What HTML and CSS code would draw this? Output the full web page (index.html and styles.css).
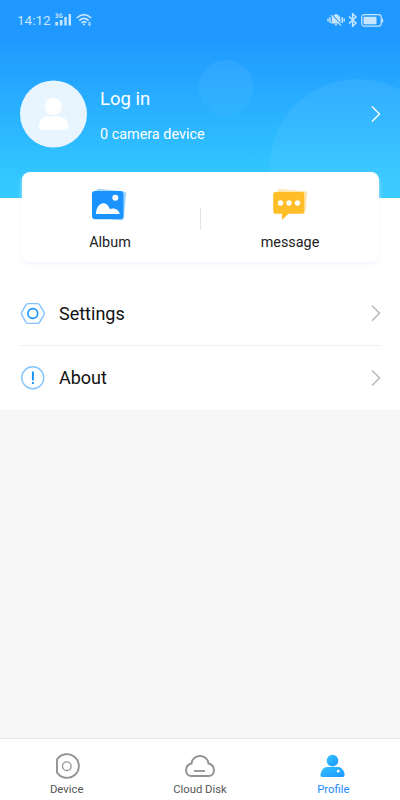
FILE: index.html
```html
<!DOCTYPE html>
<html lang="en">
<head>
<meta charset="utf-8">
<title>Profile</title>
<link rel="stylesheet" href="styles.css">
</head>
<body>
<div class="app">
  <header class="hero">
    <svg class="bubbles" width="400" height="198" viewBox="0 0 400 198">
      <defs><linearGradient id="bubble" x1="0" y1="0" x2="0" y2="1"><stop offset="0" stop-color="#fff" stop-opacity=".06"/><stop offset="1" stop-color="#fff" stop-opacity=".03"/></linearGradient></defs>
      <circle cx="226" cy="87.500" r="27.300" fill="url(#bubble)"/>
      <circle cx="358" cy="167" r="88" fill="url(#bubble)"/>
    </svg>
    <div class="status">
      <span class="time">14:12</span>
      <svg class="signal" width="17" height="14" viewBox="0 0 17 14" fill="#c7e5ff">
        <path d="M.3 9h2.700v3.500H.3zM4.800 7h2.700v5.500H4.800zM9.300 4h2.400v8.500H9.300zM13.600 1H16v11.500h-2.400z"/>
        <path d="M.5.900h2.300v3.600H.5M1.200 2.700h1.500M7.200 1.100H4.900v3.300h2.400V2.900H6.200" fill="none" stroke="#c7e5ff" stroke-width="1"/>
      </svg>
      <svg class="wifi" width="17" height="14" viewBox="0 0 17 14">
        <path d="M.8 5Q8 -1.800 15.200 5M3.300 7.600Q8 3.200 12.700 7.600M5.500 10Q8 7.500 10.300 9.700" fill="none" stroke="#c7e5ff" stroke-width="1.700"/>
        <path d="M6.500 11Q8 10 9.300 11L8 12.700zM11.800 10.500l1.700-2 1.700 2zM11.800 11.200h3.400l-1.700 2z" fill="#c7e5ff"/>
      </svg>
      <svg class="mute" width="18" height="14" viewBox="0 0 18 14">
        <path d="M4 10.500Q5 9 4.800 6C4.800 3.300 6.300 1.900 8 1.600Q9 0 10 1.600C12 1.900 13.300 3.500 13.300 6Q13.300 9 14.300 10.500zM7.300 11.300h3.400Q9 14 7.300 11.300" fill="#c7e5ff"/>
        <path d="M3 4v6M1 5.500v3M15.200 4v6M17.200 5.500v3" stroke="#c7e5ff" stroke-width="1.400"/>
        <path d="M4.900 1.600l10.500 11" stroke="#209aff" stroke-width="1.200"/>
        <path d="M3.900 2.200l10.300 10.500" stroke="#c7e5ff" stroke-width="1.200"/>
      </svg>
      <svg class="bluetooth" width="10" height="14" viewBox="0 0 10 14" fill="none" stroke="#c7e5ff" stroke-width="1.500">
        <path d="M1 3.500l7 6.500-3.400 3.200V.8L8 4 1 10.500"/>
      </svg>
      <svg class="battery" width="23" height="13" viewBox="0 0 23 13">
        <rect x=".7" y=".7" width="19.500" height="11.400" rx="2.500" fill="none" stroke="#c7e5ff" stroke-width="1.200"/>
        <rect x="2.500" y="2.700" width="13" height="7.600" rx="1" fill="#c7e5ff"/>
        <path d="M21.500 4.500v4" stroke="#c7e5ff" stroke-width="1.300"/>
      </svg>
    </div>
    <div class="account">
      <svg class="avatar" width="68" height="68" viewBox="0 0 68 68">
        <circle cx="33.500" cy="34" r="33.500" fill="#e8f5ff"/>
        <circle cx="33.300" cy="26.500" r="8.600" fill="#fff"/>
        <path d="M18.800 46.500c0-6 3.700-10.300 9.500-10.300h10.200c5.800 0 9.500 4.300 9.500 10.300q0 3.500-3.500 3.500H22.300q-3.500 0-3.500-3.500" fill="#fff"/>
      </svg>
      <div class="identity">
        <div class="login">Log in</div>
        <div class="count">0 camera device</div>
      </div>
      <svg class="arrow" width="10" height="18" viewBox="0 0 10 18" fill="none" stroke="#fff" stroke-width="1.400"><path d="M1 1.500L8.500 9 1 16.500"/></svg>
    </div>
  </header>

  <section class="shortcuts">
    <div class="shortcut">
      <svg class="album" width="36" height="36" viewBox="0 0 36 36">
        <rect x="3" y="2" width="30" height="29" rx="2.500" transform="rotate(6 18 17)" fill="#a9d8ff"/>
        <rect x="0" y="3" width="31.500" height="28.300" rx="3" fill="#1b93ff"/>
        <circle cx="23.300" cy="9.800" r="3" fill="#fff"/>
        <path d="M4 26c0-5.500 3-10.700 7.300-10.700 3.300 0 5.500 2.700 6.700 6 3.500-2 9 .2 9.700 4.700z" fill="#fff"/>
      </svg>
      <span>Album</span>
    </div>
    <div class="divider"></div>
    <div class="shortcut">
      <svg class="message" width="36" height="36" viewBox="0 0 36 36">
        <rect x="3.500" y="2" width="30" height="22" rx="2" transform="rotate(5 18 13)" fill="#ffe6b2"/>
        <path d="M2.500 4H29q2.300 0 2.300 2.300V23.500q0 2.300-2.300 2.300H15.500L9 32v-6.200H2.500Q.2 25.800.2 23.500V6.300Q.2 4 2.500 4" fill="#ffbd28"/>
        <g fill="#fff"><circle cx="7.500" cy="15" r="2.700"/><circle cx="16" cy="15" r="2.700"/><circle cx="24.500" cy="15" r="2.700"/></g>
      </svg>
      <span>message</span>
    </div>
  </section>

  <main class="menu">
    <div class="item">
      <svg class="glyph" width="26" height="26" viewBox="0 0 26 26" fill="none">
        <path d="M8 2.600H17.600Q19 2.600 19.700 3.800L24 11.200Q24.700 12.500 24 13.800L19.700 21.200Q19 22.400 17.600 22.400H8Q6.600 22.400 5.900 21.200L1.800 13.800Q1.100 12.500 1.800 11.200L5.900 3.800Q6.600 2.600 8 2.600z" stroke="#83c3ff" stroke-width="1.400"/>
        <circle cx="12.800" cy="12.500" r="4.900" stroke="#1693ff" stroke-width="1.600"/>
      </svg>
      <span class="label">Settings</span>
      <svg class="chevron" width="10" height="18" viewBox="0 0 10 18" fill="none" stroke="#b5b5b5" stroke-width="1.400"><path d="M1 .8L8.500 8.300 1 15.800"/></svg>
    </div>
    <div class="item">
      <svg class="glyph" width="26" height="26" viewBox="0 0 26 26" fill="none">
        <circle cx="12.800" cy="12.700" r="11" stroke="#83c3ff" stroke-width="1.400"/>
        <path d="M12.900 6.500v9M12.900 17v2" stroke="#1693ff" stroke-width="1.900"/>
      </svg>
      <span class="label">About</span>
      <svg class="chevron" width="10" height="18" viewBox="0 0 10 18" fill="none" stroke="#b5b5b5" stroke-width="1.400"><path d="M1 1.500L8.500 9 1 16.500"/></svg>
    </div>
  </main>

  <nav class="tabs">
    <div class="tab">
      <svg width="30" height="28" viewBox="0 0 30 28" fill="none" stroke="#929292">
        <path d="M5 7.500A11.900 11.900 0 1 1 5 20.500z" stroke-width="1.900" stroke-linejoin="round"/>
        <circle cx="14.800" cy="14.200" r="4.300" stroke-width="1.300"/>
      </svg>
      <span>Device</span>
    </div>
    <div class="tab">
      <svg width="30" height="28" viewBox="0 0 30 28" fill="none" stroke="#929292">
        <path d="M6.500 24C-.5 24-1 13.500 6.500 11.500 8 1.500 22 1.500 23.500 11.500 31 13.500 30.500 24 23.500 24z" stroke-width="2"/>
        <path d="M9 19h11" stroke-width="1.800"/>
      </svg>
      <span>Cloud Disk</span>
    </div>
    <div class="tab active">
      <svg width="30" height="28" viewBox="0 0 30 28">
        <defs><linearGradient id="person" x1="0" y1="0" x2="1" y2="1"><stop offset="0" stop-color="#32c2ff"/><stop offset="1" stop-color="#1d96ff"/></linearGradient></defs>
        <circle cx="14.500" cy="8.600" r="5.800" fill="url(#person)"/>
        <path d="M9 15H20.500Q24.500 15 26.500 21.500v1.500q.3 2-2 2H4.500Q2 25 2.500 22.500 4 15 9 15" fill="url(#person)"/>
        <circle cx="20.200" cy="19.200" r="1.400" fill="#fff"/>
      </svg>
      <span>Profile</span>
    </div>
  </nav>
</div>
</body>
</html>
```

FILE: styles.css
```css
* { box-sizing: border-box; }
body { margin: 0; font-family: Roboto, sans-serif; color: #222; background: #f6f6f6; }
svg { display: block; flex: none; }
.app { width: 400px; height: 800px; display: flex; flex-direction: column; background: #f6f6f6; }

.hero { position: relative; height: 198px; flex: none; color: #fff; background: linear-gradient(#1f99ff 0, #1f99ff 40px, #33c8ff 180px, #34caff 100%); }
.bubbles { position: absolute; left: 0; top: 0; }
.status { position: relative; display: flex; align-items: center; height: 40px; padding: 0 16px 0 17px; color: #c7e5ff; }
.time { width: 37px; font-size: 13.5px; line-height: 20px; }
.signal { margin-left: 1px; }
.wifi { margin-left: 4px; }
.mute { margin-left: auto; }
.bluetooth { margin-left: 3px; }
.battery { margin-left: 3px; }
.account { position: relative; display: flex; align-items: center; height: 68px; margin-top: 40px; padding: 0 19px 0 20px; }
.identity { flex: 1; margin-left: 12px; }
.login { font-size: 18.5px; line-height: 24px; margin-top: 3px; }
.count { font-size: 14.4px; line-height: 20px; margin-top: 14px; }

.shortcuts { position: relative; z-index: 1; display: flex; align-items: center; flex: none; height: 90px; margin: -26px 21px -64px 22px; border-radius: 8px; background: #fff; box-shadow: 0 3px 5px -1px #edf2ff; }
.shortcut { flex: 1; display: flex; flex-direction: column; align-items: center; height: 90px; padding-top: 16px; font-size: 14.4px; line-height: 22px; }
.shortcut span { margin-top: 8px; margin-right: 2px; }
.album { margin-right: 3px; }
.message { margin-left: 2px; }
.message + span { margin-right: 0; }
.divider { width: 1px; height: 22px; margin-top: 3px; background: #e3e3e3; }

.menu { flex: none; height: 212px; padding: 84px 19px 0 20px; background: #fff; }
.item { display: flex; align-items: center; height: 64px; }
.item:first-child { border-bottom: 1px solid #f0f0f0; }
.label { flex: 1; margin-left: 13px; font-size: 18px; line-height: 24px; color: #111; }

.tabs { display: flex; flex: none; height: 62px; margin-top: auto; border-top: 1px solid #e8e8e8; background: #fff; }
.tab { flex: 1; display: flex; flex-direction: column; align-items: center; padding-top: 13px; font-size: 11.3px; line-height: 16px; color: #555; }
.tab span { margin-top: 2px; }
.active { color: #2589ff; }
```
